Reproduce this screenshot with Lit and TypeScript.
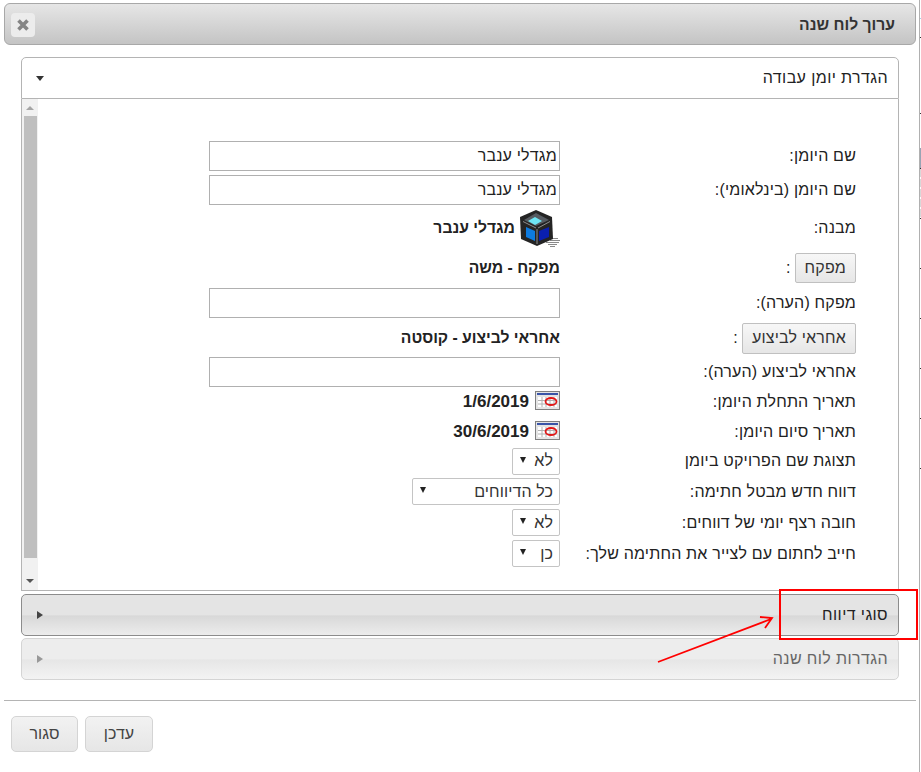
import { LitElement, html, css, svg } from "lit";
import { customElement } from "lit/decorators.js";

const cube = html`<svg class="cube" viewBox="0 0 40 40" width="40" height="40" aria-hidden="true">
  <path d="M28 30h10v1H28zM30 32h10v1H30zM26 34h13v1H26zM28 36h9v1h-9zM30 38h5v1h-5z" fill="#8a8a8a"/>
  <path d="M16 2 32 9 33 31 17 38 1 31 0 9z" fill="#242424"/>
  <path d="M16 5 29 12 16 18 4 12z" fill="#565b61"/>
  <path d="M15 9 22 13 15 17 8 13z" fill="#6fe6f5"/>
  <path d="M6 19 15 23V33L6 29z" fill="#0d7be0"/>
  <path d="M19 23 29 19V29L19 33z" fill="#0a1fb0"/>
  <path d="M3 13.500 16 20M30 13.500 18 20M17 21V36" stroke="#8d8d8d" stroke-width="1" fill="none"/>
</svg>`;

const cal = html`<svg class="cal" viewBox="0 0 25 19" width="25" height="19" aria-hidden="true">
  <rect x=".5" y=".5" width="24" height="18" fill="#e4e4e4" stroke="#808080"/>
  <rect x="2" y="2" width="21" height="2" fill="#3a55a8"/>
  <rect x="3" y="6" width="19" height="10" fill="#fff"/>
  <path d="M7 6v10M11 6v10M15 6v10M19 6v10M3 9.500h19M3 13h19" stroke="#b0b0b0" stroke-width="1" fill="none"/>
  <ellipse cx="16" cy="10.500" rx="5.500" ry="3.500" fill="none" stroke="#e01818" stroke-width="1.800"/>
</svg>`;

const sel = (label: string, cls = "") =>
  html`<div class="select ${cls}"><span>${label}</span><i class="caret"></i></div>`;

const row = (h: number, label: unknown, ctl: unknown) =>
  html`<div class="lab" style="height:${h}px">${label}</div><div class="ctl" style="height:${h}px">${ctl}</div>`;

const ticks = [37, 113, 168, 218, 268, 318, 368, 418, 468];

@customElement("app-root")
export class AppRoot extends LitElement {
  static styles = css`
    :host { display: block; position: relative; width: 921px; height: 772px; overflow: hidden; background: #fff;
      font-family: "Liberation Sans", Arial, sans-serif; color: #222; font-size: 16px; }
    .page { direction: rtl; padding: 3px 5px 0 4px; box-sizing: border-box; width: 921px; height: 772px; }
    .title { height: 42px; box-sizing: border-box; border: 1px solid #a8a8a8; border-radius: 6px;
      background: linear-gradient(#e6e6e6, #c4c4c4); display: flex; align-items: center; justify-content: space-between;
      padding: 1px 20px 0 6px; font-weight: bold; font-size: 15.700px; color: #333; }
    .close { width: 24px; height: 24px; border-radius: 4px; background: #ececec; display: flex; align-items: center; justify-content: center; }
    .acc { margin: 12px 17px 0; width: 878px; }
    .head { height: 42px; box-sizing: border-box; border: 1px solid #b4b4b4; border-radius: 5px 5px 0 0; background: #fff;
      display: flex; align-items: center; justify-content: space-between; padding: 0 10px 0 14px; color: #222; letter-spacing: .4px; }
    .panel { height: 492px; box-sizing: border-box; border: 1px solid #b4b4b4; border-top: 0; display: flex; direction: ltr; background: #fff; }
    .sb { width: 16px; background: #f1f1f1; display: flex; flex-direction: column; align-items: center; padding: 7px 0; box-sizing: border-box; flex: none; }
    .thumb { flex: 1; width: 13px; background: #bfbfbf; margin: 6px 0 21px; }
    .up { width: 0; height: 0; border: 4px solid transparent; border-top: 0; border-bottom: 4px solid #a5a5a5; }
    .dn { width: 0; height: 0; border: 4px solid transparent; border-bottom: 0; border-top: 4px solid #555; }
    .form { flex: 1; direction: rtl; padding: 40px 42px 0 0; display: grid; grid-template-columns: 296px 351px; justify-content: start; align-content: start; }
    .lab { display: flex; align-items: center; font-size: 16px; color: #222; letter-spacing: .18px; }
    .ctl { display: flex; align-items: center; font-size: 16px; }
    .input { width: 351px; height: 30px; box-sizing: border-box; border: 1px solid #b0b0b0; padding: 0 2px; line-height: 28px; font-size: 16px; background: #fff; letter-spacing: .2px; }
    .btn { box-sizing: border-box; border: 1px solid #c0c0c0; border-radius: 2px; background: linear-gradient(#f7f7f7, #e6e6e6);
      padding: 0 9px; display: flex; align-items: center; font-size: 16px; color: #333; letter-spacing: .18px; }
    .h30 { height: 30px; } .h31 { height: 31px; }
    .colon { margin-right: 4px; }
    b { font-weight: bold; font-size: 15.700px; color: #222; }
    .date { font-size: 17px; }
    .cube { margin-left: 5px; flex: none; }
    .cal { margin-left: 6px; margin-bottom: 3px; flex: none; }
    .select { height: 27px; box-sizing: border-box; border: 1px solid #c4c4c4; border-radius: 2px; background: #fff; display: flex; align-items: center; justify-content: space-between;
      padding: 0 6px 0 7px; width: 48px; font-size: 16px; color: #333; letter-spacing: .1px; }
    .select.wide { width: 148px; }
    .caret { width: 0; height: 0; border: 3.500px solid transparent; border-bottom: 0; border-top: 6px solid #222; margin-bottom: 3px; }
    .bar { height: 42px; box-sizing: border-box; margin-top: 3px; border: 1px solid #8c8c8c; border-radius: 5px; background: linear-gradient(#e4e4e4 50%, #d8d8d8 52%, #ececec);
      display: flex; align-items: center; justify-content: space-between; padding: 0 10px 0 15px; color: #222; letter-spacing: .4px; }
    .bar.off { border-color: #d4d4d4; background: linear-gradient(#ededed 50%, #e6e6e6 52%, #f3f3f3); color: #666; margin-top: 2px; }
    .tri { width: 0; height: 0; border: 4px solid transparent; border-right: 0; border-left: 6px solid #444; }
    .off .tri { border-left-color: #999; }
    .down { width: 0; height: 0; border: 4.500px solid transparent; border-bottom: 0; border-top: 5px solid #333; }
    .sep { margin: 20px 0 0; border-top: 1px solid #b4b4b4; height: 0; }
    .foot { display: flex; direction: ltr; gap: 7px; padding: 15px 0 0 7px; }
    .fbtn { height: 36px; box-sizing: border-box; border: 1px solid #d4d4d4; border-radius: 5px; background: linear-gradient(#f2f2f2, #e6e6e6);
      display: flex; align-items: center; justify-content: center; font-size: 16px; color: #444; }
    .w67 { width: 67px; } .w68 { width: 68px; }
    .edge { position: absolute; left: 919px; top: 0; width: 1px; height: 772px; background: #b0b0b0; }
    .mark { position: absolute; left: 0; top: 0; pointer-events: none; }
  `;

  render() {
    return html`<div class="page">
      <div class="title"><span>ערוך לוח שנה</span>
        <span class="close"><svg width="14" height="14" viewBox="0 0 14 14" aria-hidden="true"><path d="M2.500 2.500 11.500 11.500M11.500 2.500 2.500 11.500" stroke="#858585" stroke-width="3.600" fill="none"/></svg></span>
      </div>
      <div class="acc">
        <div class="head"><span>הגדרת יומן עבודה</span><i class="down"></i></div>
        <div class="panel">
          <div class="sb"><i class="up"></i><div class="thumb"></div><i class="dn"></i></div>
          <div class="form">
            ${row(34, "שם היומן:", html`<div class="input">מגדלי ענבר</div>`)}
            ${row(34, "שם היומן (בינלאומי):", html`<div class="input">מגדלי ענבר</div>`)}
            ${row(42, "מבנה:", html`${cube}<b>מגדלי ענבר</b>`)}
            ${row(38, html`<div class="btn h30">מפקח</div><span class="colon">:</span>`, html`<b>מפקח - משה</b>`)}
            ${row(32, "מפקח (הערה):", html`<div class="input"></div>`)}
            ${row(38, html`<div class="btn h31">אחראי לביצוע</div><span class="colon">:</span>`, html`<b>אחראי לביצוע - קוסטה</b>`)}
            ${row(30, "אחראי לביצוע (הערה):", html`<div class="input"></div>`)}
            ${row(30, "תאריך התחלת היומן:", html`${cal}<b class="date">1/6/2019</b>`)}
            ${row(29, "תאריך סיום היומן:", html`${cal}<b class="date">30/6/2019</b>`)}
            ${row(30, "תצוגת שם הפרויקט ביומן", sel("לא"))}
            ${row(31, "דווח חדש מבטל חתימה:", sel("כל הדיווחים", "wide"))}
            ${row(31, "חובה רצף יומי של דווחים:", sel("לא"))}
            ${row(31, "חייב לחתום עם לצייר את החתימה שלך:", sel("כן"))}
          </div>
        </div>
        <div class="bar"><span>סוגי דיווח</span><i class="tri"></i></div>
        <div class="bar off"><span>הגדרות לוח שנה</span><i class="tri"></i></div>
      </div>
      <div class="sep"></div>
      <div class="foot"><div class="fbtn w67">סגור</div><div class="fbtn w68">עדכן</div></div>
    </div>
    <div class="edge"></div>
    <svg class="mark" width="921" height="772" aria-hidden="true">
      <rect x="920" y="18" width="1" height="1" fill="#a8d0e8"/>
      <rect x="920" y="148" width="1" height="20" fill="#98a4b4"/>
      <path d="M920.500 169V218" stroke="#d8d8d8" stroke-dasharray="8 2" fill="none"/>
      ${ticks.map((y) => svg`<rect x="920" y=${y} width="1" height="1" fill="#333"/>`)}
      <rect x="780" y="590" width="137" height="49" fill="none" stroke="#f00" stroke-width="2"/>
      <path d="M658 662 771 619M760 617 772 618 765 628" fill="none" stroke="#f00" stroke-width="1.800"/>
    </svg>`;
  }
}
